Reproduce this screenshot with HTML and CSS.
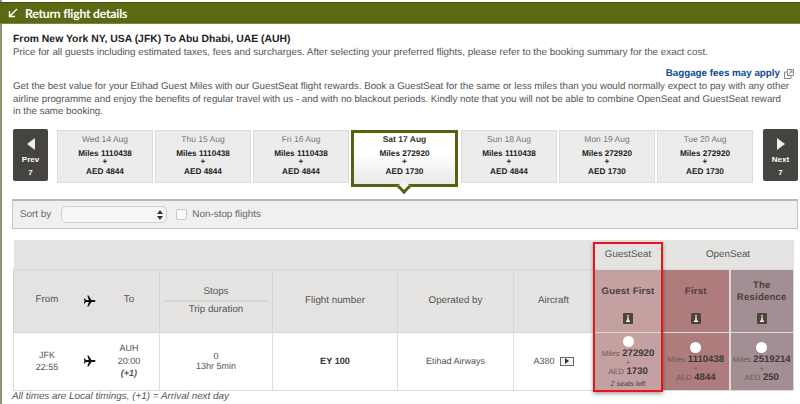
FILE: index.html
```html
<!DOCTYPE html>
<html lang="en">
<head>
<meta charset="utf-8">
<title>Return flight details</title>
<link rel="stylesheet" href="styles.css">
</head>
<body>
<div class="page">
  <header class="bar">
    <svg class="bar-icon" width="12" height="12" viewBox="0 0 12 12"><path d="M10 2 3 9M2.500 4v5.500H8" fill="none" stroke="#fff" stroke-width="1.400"/></svg>
    <span class="bar-title">Return flight details</span>
  </header>
  <main class="content">
    <h1 class="route">From New York NY, USA (JFK) To Abu Dhabi, UAE (AUH)</h1>
    <p class="note">Price for all guests including estimated taxes, fees and surcharges. After selecting your preferred flights, please refer to the booking summary for the exact cost.</p>
    <div class="baggage"><a class="baggage-link">Baggage fees may apply</a>
      <svg width="12" height="12" viewBox="0 0 12 12"><path d="M4.500 1.500h6v6h-6zM4.500 4H1.500v6.500H8V7.500" fill="none" stroke="#8a8a8a"/><path d="M6 6l3-3M7 3h2v2" fill="none" stroke="#8a8a8a"/></svg>
    </div>
    <p class="note promo">Get the best value for your Etihad Guest Miles with our GuestSeat flight rewards. Book a GuestSeat for the same or less miles than you would normally expect to pay with any other airline programme and enjoy the benefits of regular travel with us - and with no blackout periods. Kindly note that you will not be able to combine OpenSeat and GuestSeat reward<br>in the same booking.</p>

    <div class="dates">
      <button class="nav nav-prev"><svg width="10" height="12" viewBox="0 0 10 12"><path d="M9 0v12L1 6z" fill="#eee"/></svg><b>Prev</b><b>7</b></button>
      <div class="tabs">
        <div class="tab"><span class="day">Wed 14 Aug</span><b>Miles 1110438</b><b class="plus">+</b><b>AED 4844</b></div>
        <div class="tab"><span class="day">Thu 15 Aug</span><b>Miles 1110438</b><b class="plus">+</b><b>AED 4844</b></div>
        <div class="tab"><span class="day">Fri 16 Aug</span><b>Miles 1110438</b><b class="plus">+</b><b>AED 4844</b></div>
        <div class="tab tab-on"><b class="day">Sat 17 Aug</b><b>Miles 272920</b><b class="plus">+</b><b>AED 1730</b><i class="notch"></i></div>
        <div class="tab"><span class="day">Sun 18 Aug</span><b>Miles 1110438</b><b class="plus">+</b><b>AED 4844</b></div>
        <div class="tab"><span class="day">Mon 19 Aug</span><b>Miles 272920</b><b class="plus">+</b><b>AED 1730</b></div>
        <div class="tab"><span class="day">Tue 20 Aug</span><b>Miles 272920</b><b class="plus">+</b><b>AED 1730</b></div>
      </div>
      <button class="nav nav-next"><svg width="10" height="12" viewBox="0 0 10 12"><path d="M1 0v12l8-6z" fill="#eee"/></svg><b>Next</b><b>7</b></button>
    </div>

    <div class="sort">
      <span class="sort-label">Sort by</span>
      <span class="select"><svg width="6" height="10" viewBox="0 0 6 10"><path d="M3 0l3 4H0zM3 10l3-4H0z" fill="#333"/></svg></span>
      <span class="check"></span>
      <span class="sort-label">Non-stop flights</span>
    </div>

    <div class="table-wrap">
      <table class="flights">
        <colgroup>
          <col class="c-route"><col class="c-stops"><col class="c-num"><col class="c-op"><col class="c-air"><col class="c-gf"><col class="c-f"><col class="c-r">
        </colgroup>
        <tr class="r-top">
          <td colspan="5"></td>
          <td class="group">GuestSeat</td>
          <td colspan="2" class="group">OpenSeat</td>
        </tr>
        <tr class="r-head">
          <th><div class="route-cell"><span>From</span><svg class="plane" width="13" height="12" viewBox="0 0 13 12"><path d="M12.500 6c0-.6-.8-1-1.600-1H8.500L5.500.5H4.300L5.800 5H3L1.800 3.500H.8L1.500 6l-.7 2.500h1L3 7h2.800L4.300 11.500h1.200L8.500 7h2.400c.8 0 1.600-.4 1.600-1z" fill="#111"/></svg><span>To</span></div></th>
          <th><div class="stops">Stops</div><div class="dur">Trip duration</div></th>
          <th>Flight number</th>
          <th>Operated by</th>
          <th>Aircraft</th>
          <th class="fare gf"><div class="fare-name">Guest First</div><span class="info"><svg width="4" height="7" viewBox="0 0 4 7"><path d="M1.200 0h1.600v1.500H1.200zM1.200 2.300h1.600v3.200H4V7H0V5.500h1.200z" fill="#eee"/></svg></span></th>
          <th class="fare f"><div class="fare-name">First</div><span class="info"><svg width="4" height="7" viewBox="0 0 4 7"><path d="M1.200 0h1.600v1.500H1.200zM1.200 2.300h1.600v3.200H4V7H0V5.500h1.200z" fill="#eee"/></svg></span></th>
          <th class="fare r"><div class="fare-name">The<br>Residence</div><span class="info"><svg width="4" height="7" viewBox="0 0 4 7"><path d="M1.200 0h1.600v1.500H1.200zM1.200 2.300h1.600v3.200H4V7H0V5.500h1.200z" fill="#eee"/></svg></span></th>
        </tr>
        <tr class="r-body">
          <td><div class="route-cell"><span>JFK<br>22:55</span><svg class="plane" width="13" height="12" viewBox="0 0 13 12"><path d="M12.500 6c0-.6-.8-1-1.600-1H8.500L5.500.5H4.300L5.800 5H3L1.800 3.500H.8L1.500 6l-.7 2.500h1L3 7h2.800L4.300 11.500h1.200L8.500 7h2.400c.8 0 1.600-.4 1.600-1z" fill="#111"/></svg><span>AUH<br>20:00<br><b class="next-day">(+1)</b></span></div></td>
          <td>0<br>13hr 5min</td>
          <td class="num">EY 100</td>
          <td>Etihad Airways</td>
          <td><span class="air">A380<span class="play"><svg width="4" height="6" viewBox="0 0 4 6"><path d="M0 0l4 3-4 3z" fill="#333"/></svg></span></span></td>
          <td class="fare gf"><div class="price gf-price"><span class="radio"></span><span><small>Miles</small> <b>272920</b></span><small class="p">+</small><span><small>AED</small> <b>1730</b></span><em>2 seats left</em></div></td>
          <td class="fare f"><div class="price"><span class="radio"></span><span><small>Miles</small> <b>1110438</b></span><small class="p">+</small><span><small>AED</small> <b>4844</b></span></div></td>
          <td class="fare r"><div class="price"><span class="radio"></span><span><small>Miles</small> <b>2519214</b></span><small class="p">+</small><span><small>AED</small> <b>250</b></span></div></td>
        </tr>
      </table>
      <div class="highlight"></div>
    </div>
    <p class="foot">All times are Local timings, (+1) = Arrival next day</p>
  </main>
</div>
</body>
</html>
```
FILE: styles.css
```css
* { box-sizing: border-box; }
html, body { margin: 0; padding: 0; background: #fff; }
body { font-family: "Liberation Sans", Arial, sans-serif; color: #555; font-size: 9.9px; width: 800px; height: 404px; overflow: hidden; text-rendering: geometricPrecision; }
p, h1 { margin: 0; }

.page { border-left: 2px solid #8f9670; height: 404px; padding-top: 2px; }
.bar { margin-left: -2px; height: 22px; background: #5b6a12; border-top: 1px solid #45500e; border-bottom: 1px solid #7b8450; display: flex; align-items: center; padding-left: 7px; gap: 6px; }
.bar-title { font-family: Lato, sans-serif; font-weight: 700; color: #fff; font-size: 12.200px; letter-spacing: -.2px; }
.bar-icon { display: block; }

.content { padding: 9px 2px 0 11px; }
.route { font-size: 10.4px; font-weight: bold; color: #222; line-height: 14px; }
.note { line-height: 12.500px; color: #555; font-size: 9.860px; }
.baggage { margin-top: 7.500px; margin-right: 3px; height: 13px; display: flex; justify-content: flex-end; align-items: center; gap: 3px; }
.baggage-link { color: #0f4c92; font-weight: bold; font-size: 9.800px; }
.note.promo { width: 782px; margin-top: 1px; font-size: 9.750px; }

.dates { margin-top: 10.500px; display: flex; align-items: flex-start; height: 59px; }
.nav { width: 35px; height: 52px; padding: 9px 0 0; border: 0; border-radius: 2px; background: #46443f; color: #fff; display: flex; flex-direction: column; align-items: center; font: bold 8px "Liberation Sans", sans-serif; flex: none; }
.nav svg { margin-bottom: 3px; }
.nav b { line-height: 13px; }
.nav-prev { margin-right: 9px; }
.nav-next { margin-left: 10px; }
.tabs { display: flex; gap: 2px; align-items: flex-start; margin-top: 1px; }
.tab { width: 96px; height: 53px; background: #ececec; border: 1px solid #dcdcdc; display: flex; flex-direction: column; align-items: center; padding-top: 3px; color: #222; font-size: 8.200px; position: relative; }
.tab b { display: block; line-height: 9px; }
.tab b.plus { line-height: 7px; height: 7px; }
.tab b:last-of-type { margin-top: 2px; }
.tab .day { color: #777; font-size: 8.500px; line-height: 11px; margin-bottom: 4px; }
.tab-on { width: 107px; height: 57px; margin: 0 1px 0 0; background: linear-gradient(#fff 40%, #e9e9e9); border: 3px solid #55630f; padding-top: 1px; }
.tab b.day { color: #333; line-height: 11px; margin-top: 0; }
.notch { position: absolute; left: 45px; bottom: -8px; width: 10px; height: 10px; background: #f3f3f3; border-right: 3px solid #55630f; border-bottom: 3px solid #55630f; transform: rotate(45deg); }

.sort { margin: 11px 0 0 -1px; width: 786px; height: 30px; background: #f0f0f0; border: 1px solid #c4c4c4; border-top: 2px solid #b8b8b8; display: flex; align-items: center; padding-left: 7px; }
.sort-label { font-size: 9.900px; color: #666; }
.select { margin-left: 10px; width: 106px; height: 17px; background: #f6f6f6; border: 1px solid #d0d0d0; border-radius: 5px; display: flex; align-items: center; justify-content: flex-end; padding-right: 3px; }
.check { margin: 0 5px 0 9px; width: 11px; height: 11px; border: 1px solid #c8c8c8; border-radius: 2px; background: #fafafa; }

.table-wrap { position: relative; margin-top: 11px; width: 780px; }
.flights { width: 780px; table-layout: fixed; border-collapse: collapse; color: #555; font-size: 9.800px; text-align: center; }
.c-route { width: 146px; } .c-stops { width: 113px; } .c-num { width: 125px; } .c-op { width: 116px; } .c-air { width: 80px; } .c-gf { width: 69px; } .c-f { width: 67px; } .c-r { width: 64px; }
.flights td, .flights th { padding: 0; font-weight: normal; vertical-align: middle; }
.r-top { height: 29px; background: #e4e3e1; }
.r-head { height: 63px; background: #e4e3e1; }
.r-head th { border: 1px solid #d6d6d4; }
.r-body { height: 58px; font-size: 9px; }
.r-body td { border: 1px solid #dcdcdc; }
.route-cell { display: grid; grid-template-columns: 66px 18px 62px; align-items: center; justify-items: center; }
.plane { display: block; }
.next-day { font-style: italic; color: #555; }
.route-cell span { line-height: 12.500px; }
.stops { margin: 0 3px; padding-bottom: 2px; border-bottom: 2px solid #d6d6d4; line-height: 12px; }
.dur { padding-top: 2px; line-height: 12px; }
.flights .num { font-weight: bold; color: #333; font-size: 9.200px; }
.air { display: inline-flex; align-items: center; gap: 5px; }
.play { width: 14px; height: 9px; border: 1px solid #666; display: inline-flex; align-items: center; justify-content: center; background: #f4f4f4; }
.play svg { display: block; }

.flights .fare { border: 1px solid #dcdad8; }
.flights .gf { background: #c4a0a0; }
.flights .f { background: #ae7c7d; }
.flights .r { background: #a28e93; border-left: 2px solid #dcdad8; }
.flights th.fare { vertical-align: top; padding-top: 10px; }
.flights .fare-name { font-weight: bold; color: #4a4040; font-size: 9.600px; line-height: 12.500px; letter-spacing: .2px; height: 25px; display: flex; align-items: center; justify-content: center; text-align: center; }
.info { display: flex; margin: 8px auto 0; width: 10px; height: 11px; background: #4d4638; border-radius: 1px; align-items: center; justify-content: center; }
.info svg { display: block; }
.price { display: flex; flex-direction: column; align-items: center; color: #4a3f3f; line-height: 10.500px; padding-top: 9px; height: 56px; white-space: nowrap; }
.gf-price { padding-top: 3px; }
.price small { font-size: 7.700px; font-weight: normal; color: #6a5a5a; }
.price b { font-size: 9.600px; color: #403838; }
.price .p { line-height: 6px; }
.radio { width: 11px; height: 11px; border-radius: 50%; background: #fff; margin-bottom: 1px; flex: none; }
.price em { font-size: 7.200px; color: #4a3f3f; margin-top: 2px; }

.highlight { position: absolute; left: 580px; top: 2px; width: 70px; height: 150px; border: 2px solid #e9151b; box-shadow: 0 2px 4px rgba(0,0,0,.35); }
.foot { font-style: italic; color: #555; font-size: 9.900px; margin-left: -1px; line-height: 12px; }
```
